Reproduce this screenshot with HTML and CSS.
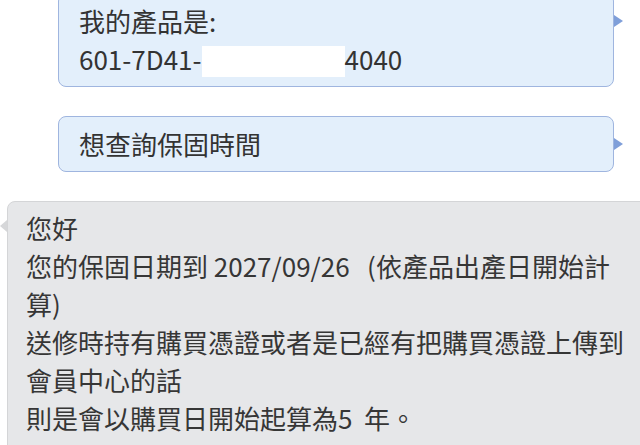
FILE: index.html
```html
<!DOCTYPE html>
<html lang="zh-Hant">
<head>
  <meta charset="UTF-8" />
  <meta name="viewport" content="width=device-width, initial-scale=1.0"/>
  <title>客服對話</title>
  <link rel="stylesheet" href="styles.css">
</head>
<body>

  <div class="chat">
    <div class="msg msg-out">
      <div class="bubble">我的產品是:<br>601-7D41-<span class="redact"></span>4040</div>
    </div>

    <div class="msg msg-out">
      <div class="bubble">想查詢保固時間</div>
    </div>

    <!-- reply from support -->
    <div class="msg msg-in">
      <div class="bubble">您好<br>您的保固日期到 2027/09/26 &nbsp;&nbsp;(依產品出產日開始計<br>算)<br>送修時持有購買憑證或者是已經有把購買憑證上傳到<br>會員中心的話<br>則是會以購買日開始起算為5 &nbsp;年。</div>
    </div>
  </div>

</body>
</html>
```

FILE: styles.css
```css
* {
  margin: 0;
  padding: 0;
  box-sizing: border-box;
}

body {
  font-family: "Noto Sans CJK TC", "Noto Sans", sans-serif;
  background: #ffffff;
  color: #333333;
  overflow: hidden;
}

.chat {
  display: flex;
  flex-direction: column;
  gap: 29px;
  margin-top: -7px;
}

.bubble {
  position: relative;
  font-size: 26px;
  line-height: 38px;
  white-space: nowrap;
  border-radius: 8px;
}

.msg-out {
  padding-left: 58px;
}

.msg-out .bubble {
  width: 556px;
  padding: 8px 20px;
  background: #e3effb;
  border: 1.5px solid #9fb5df;
}

.msg-out .bubble::after {
  content: "";
  position: absolute;
  top: 21px;
  right: -10px;
  border-left: 9px solid #7f9fd9;
  border-top: 6px solid transparent;
  border-bottom: 6px solid transparent;
}

.redact {
  display: inline-block;
  width: 143px;
  height: 31px;
  background: #ffffff;
  vertical-align: -7px;
}

.msg-in {
  padding-left: 7px;
}

.msg-in .bubble {
  width: 700px;
  padding: 7px 18px 20px 18px;
  background: #e6e7e9;
  border: 1.5px solid #d4d5d7;
  color: #363636;
}

.msg-in .bubble::before {
  content: "";
  position: absolute;
  top: 18px;
  left: -8px;
  border-right: 7px solid #d6d7d9;
  border-top: 6px solid transparent;
  border-bottom: 6px solid transparent;
}
```
